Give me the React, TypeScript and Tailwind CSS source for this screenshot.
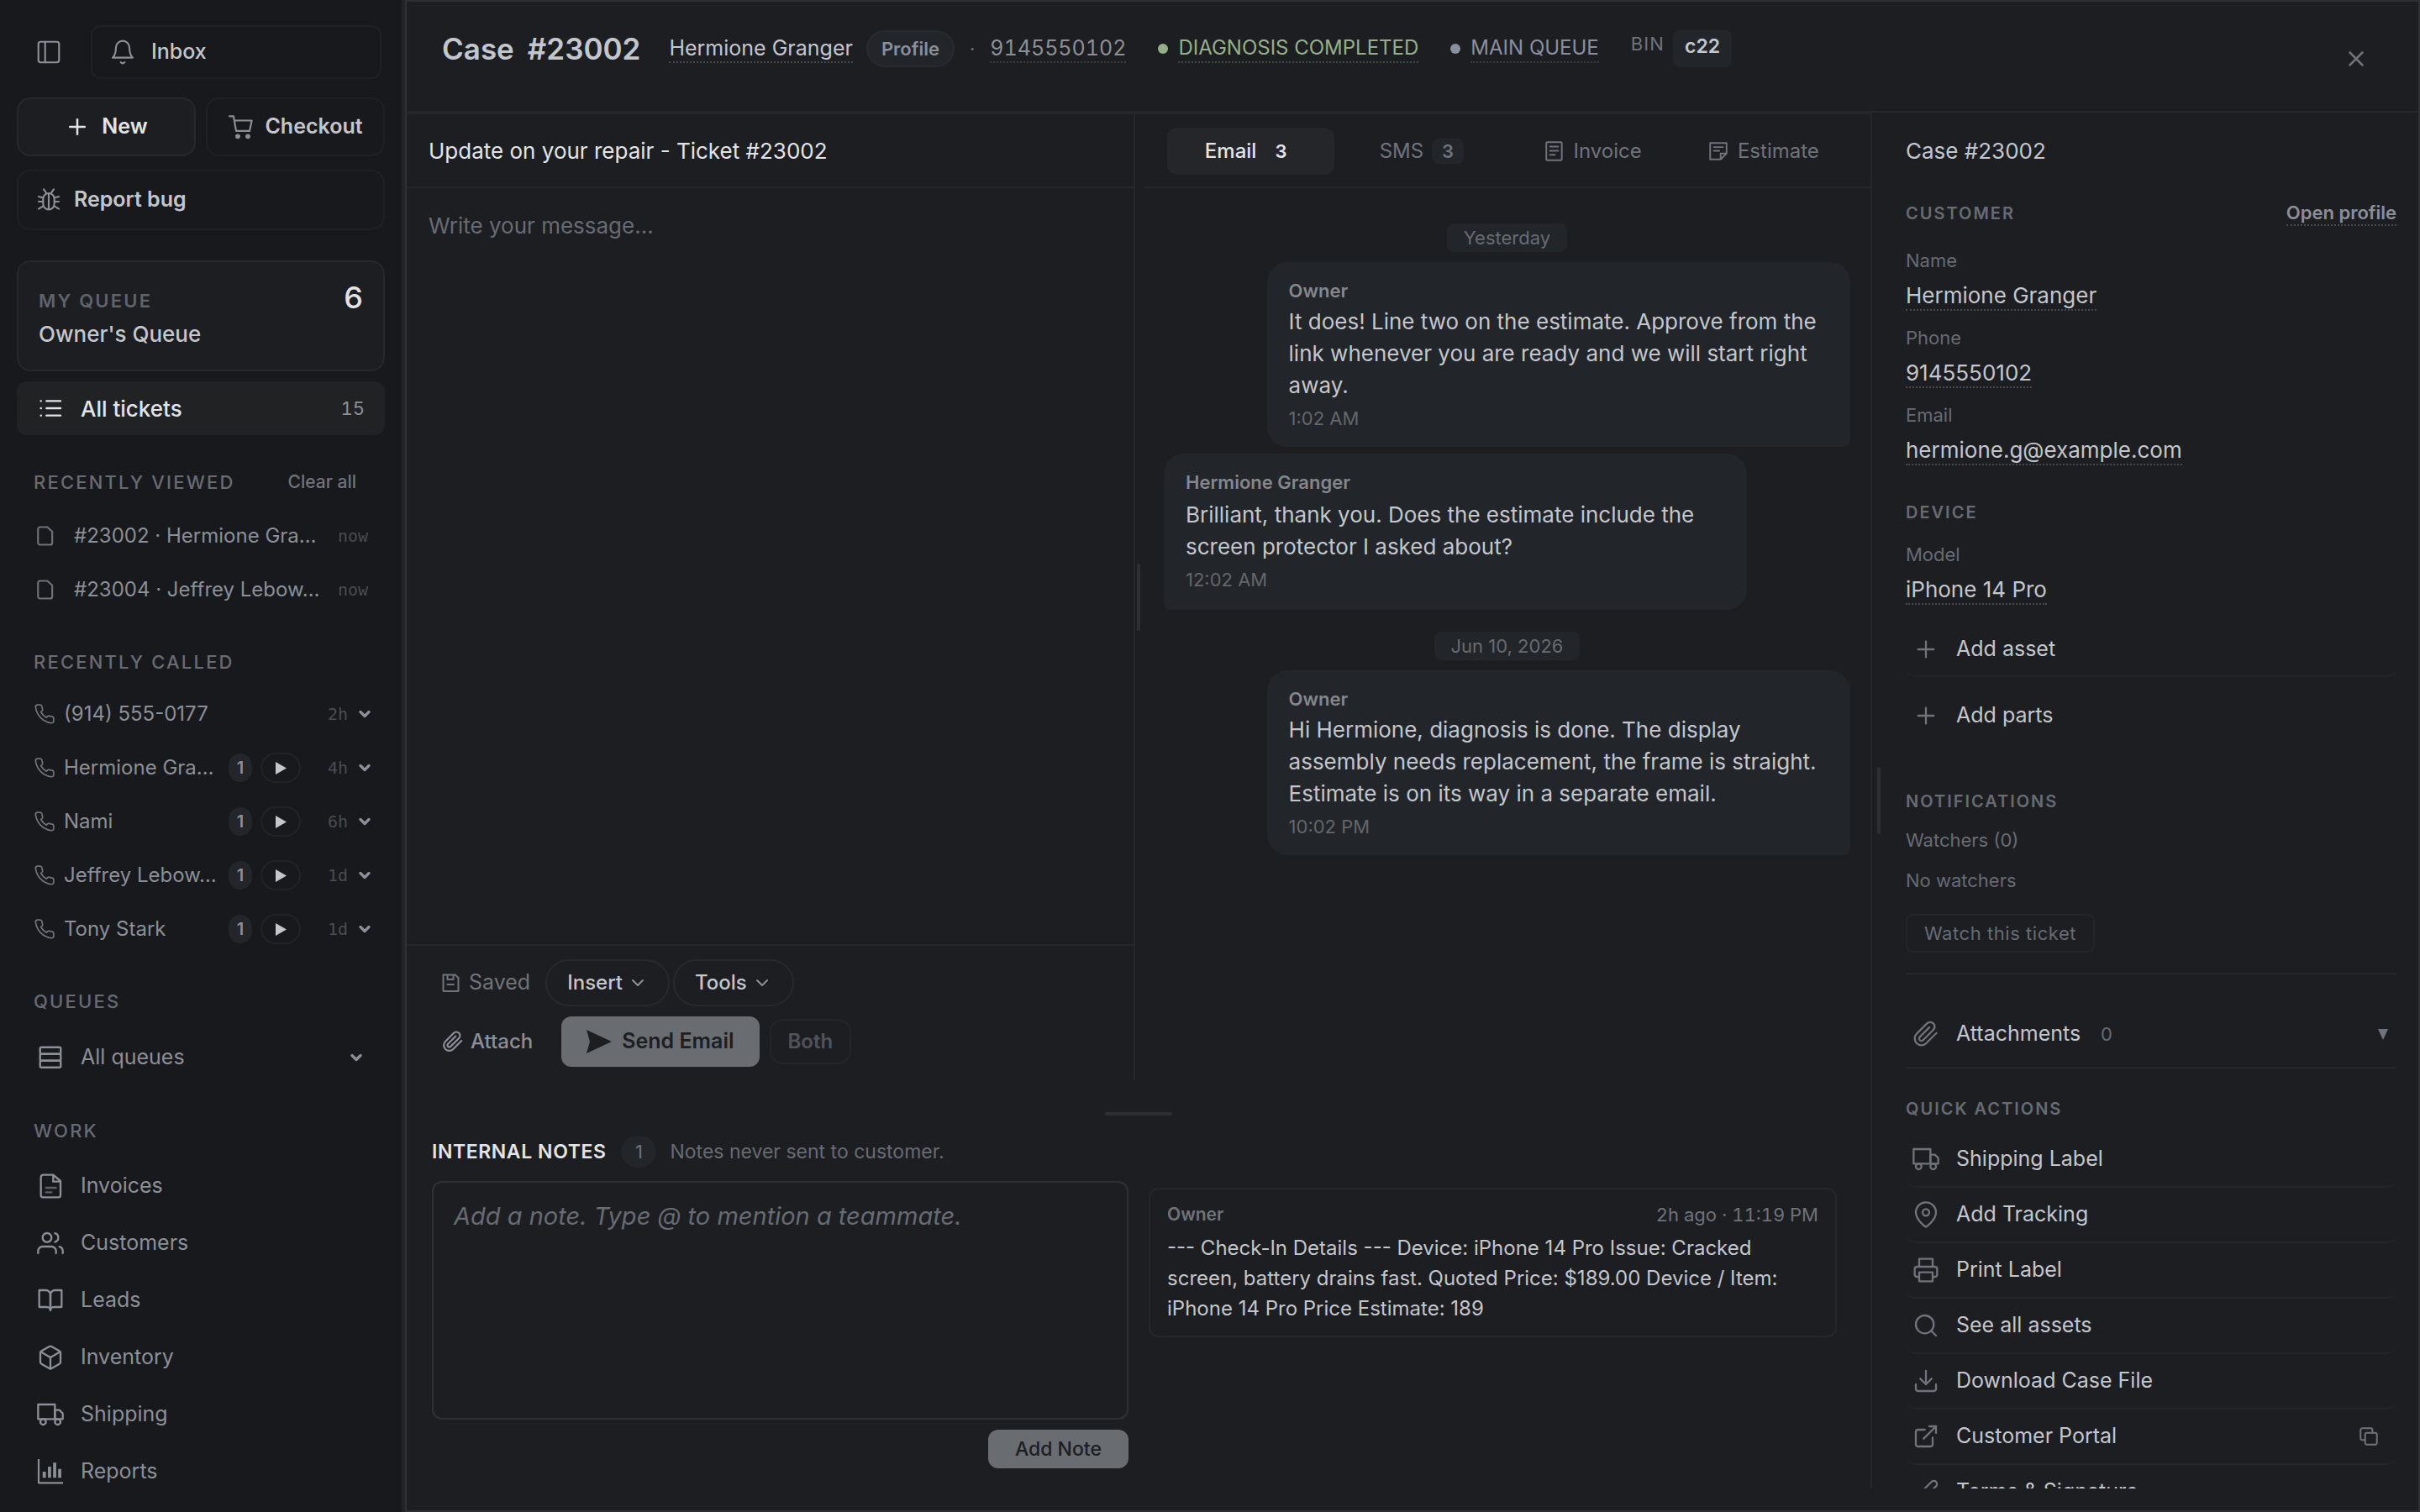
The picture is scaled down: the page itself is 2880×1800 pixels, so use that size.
import React, { useState } from 'react';
import type { ReactNode } from 'react';
import clsx from 'clsx';
import {
  FiBell,
  FiBookOpen,
  FiBox,
  FiChevronDown,
  FiDownload,
  FiEdit2,
  FiExternalLink,
  FiMapPin,
  FiPaperclip,
  FiPhone,
  FiPlus,
  FiPrinter,
  FiSearch,
  FiTruck,
  FiUsers,
  FiX,
} from 'react-icons/fi';

interface Call {
  name: string;
  time: string;
  recordings?: number;
}

interface Message {
  author: string;
  text: string;
  time: string;
  outbound: boolean;
}

const recentTickets = [
  { id: '#23002', label: '#23002 · Hermione Gra…' },
  { id: '#23004', label: '#23004 · Jeffrey Lebow…' },
];

const recentCalls: Call[] = [
  { name: '(914) 555-0177', time: '2h' },
  { name: 'Hermione Gra…', time: '4h', recordings: 1 },
  { name: 'Nami', time: '6h', recordings: 1 },
  { name: 'Jeffrey Lebow…', time: '1d', recordings: 1 },
  { name: 'Tony Stark', time: '1d', recordings: 1 },
];

const firstDay: Message[] = [
  {
    author: 'Owner',
    text: 'It does! Line two on the estimate. Approve from the link whenever you are ready and we will start right away.',
    time: '1:02 AM',
    outbound: true,
  },
  {
    author: 'Hermione Granger',
    text: 'Brilliant, thank you. Does the estimate include the screen protector I asked about?',
    time: '12:02 AM',
    outbound: false,
  },
];

const secondDay: Message[] = [
  {
    author: 'Owner',
    text: 'Hi Hermione, diagnosis is done. The display assembly needs replacement, the frame is straight. Estimate is on its way in a separate email.',
    time: '10:02 PM',
    outbound: true,
  },
];

/* ---------- icons ---------- */

function Svg({ size = 32, stroke = 1.6, children }: { size?: number; stroke?: number; children: ReactNode }) {
  return (
    <svg
      width={size}
      height={size}
      viewBox="0 0 24 24"
      fill="none"
      stroke="currentColor"
      strokeWidth={stroke}
      strokeLinecap="round"
      strokeLinejoin="round"
      className="shrink-0"
      aria-hidden="true"
    >
      {children}
    </svg>
  );
}

const PanelIcon = () => (
  <Svg>
    <rect x="2.800" y="2.800" width="18.400" height="18.400" rx="2" />
    <path d="M8.800 2.800v18.400" />
  </Svg>
);

const CartIcon = () => (
  <Svg>
    <path d="M1.500 2.500h3.700l2.300 13.200h12l2-9.300H6" />
    <circle cx="9" cy="20.500" r="1.400" fill="currentColor" />
    <circle cx="18" cy="20.500" r="1.400" fill="currentColor" />
  </Svg>
);

const BugIcon = () => (
  <Svg>
    <path d="M7 11a5 5 0 0 1 10 0v4.500a5 5 0 0 1-10 0zM12 6.500v14M7.500 2.500l2 2.800M16.500 2.500l-2 2.800M7 10.200 3 9M17 10.200 21 9M7 13.500H3M17 13.500h4M7.400 17.300 3 20M16.600 17.300 21 20" />
  </Svg>
);

const ListIcon = () => (
  <Svg stroke={1.8}>
    <path d="M8.500 5.500H21M8.500 12H21M8.500 18.500H21M3.500 5.500h.1M3.500 12h.1M3.500 18.500h.1" />
  </Svg>
);

const NoteIcon = () => (
  <Svg size={28} stroke={1.8}>
    <path d="M6.500 3h7.500L19 7.500V19a2 2 0 0 1-2 2H6.500a2 2 0 0 1-2-2V5a2 2 0 0 1 2-2z" />
  </Svg>
);

const RowsIcon = () => (
  <Svg stroke={1.8}>
    <rect x="2.800" y="2.800" width="18.400" height="6" rx="1.200" />
    <rect x="2.800" y="8.800" width="18.400" height="6" rx="1.200" />
    <rect x="2.800" y="14.800" width="18.400" height="6" rx="1.200" />
  </Svg>
);

const FileIcon = () => (
  <Svg stroke={1.75}>
    <path d="M5.500 2h9L21 7.500V20a2 2 0 0 1-2 2H5.500a2 2 0 0 1-2-2V4a2 2 0 0 1 2-2zM14.500 2v6H21" />
    <path d="M8 13.500h9M8 17.500h5" opacity="0.6" />
  </Svg>
);

const ChartIcon = () => (
  <Svg>
    <path d="M1.500 1.500v20.500h21" strokeLinecap="square" />
    <path d="M6.500 12v5.500M11.200 7.500v10M15.800 4v13.500M20.300 9.500v8" strokeWidth="2.800" strokeLinecap="butt" />
  </Svg>
);

const InvoiceIcon = () => (
  <Svg size={26} stroke={1.8}>
    <rect x="3" y="2" width="17" height="20" rx="1" />
    <path d="M7 7h9M7 11.500h9M7 16h5.500" />
  </Svg>
);

const EstimateIcon = () => (
  <Svg size={26} stroke={1.8}>
    <path d="M3 3h18v11.500L14.500 21H3zM14.500 21v-6.500H21M7 7.500h10M7 11.500h6" />
  </Svg>
);

const SaveIcon = () => (
  <Svg size={24} stroke={2}>
    <path d="M3.500 2.500h14l4 3.500v16h-18zM8.500 2.500v5.500h7V2.500M8.500 14h7.500" />
  </Svg>
);

const CopyIcon = () => (
  <Svg size={26} stroke={1.8}>
    <rect x="8" y="8" width="13" height="13" rx="2" />
    <path d="M8 16H5a2 2 0 0 1-2-2V5a2 2 0 0 1 2-2h9a2 2 0 0 1 2 2v3" />
  </Svg>
);

const SendIcon = () => (
  <svg width="30" height="28" viewBox="0 0 30 28" fill="currentColor" className="shrink-0" aria-hidden="true">
    <path d="M0 0 30 14 0 28 4 14z" />
  </svg>
);

const workItems: { label: string; icon: ReactNode }[] = [
  { label: 'Invoices', icon: <FileIcon /> },
  { label: 'Customers', icon: <FiUsers size={32} strokeWidth={1.75} /> },
  { label: 'Leads', icon: <FiBookOpen size={32} strokeWidth={1.75} /> },
  { label: 'Inventory', icon: <FiBox size={32} strokeWidth={1.75} /> },
  { label: 'Shipping', icon: <FiTruck size={32} strokeWidth={1.75} /> },
  { label: 'Reports', icon: <ChartIcon /> },
];

const quickActions: { label: string; icon: ReactNode; copy?: boolean }[] = [
  { label: 'Shipping Label', icon: <FiTruck size={32} strokeWidth={1.75} /> },
  { label: 'Add Tracking', icon: <FiMapPin size={32} strokeWidth={1.75} /> },
  { label: 'Print Label', icon: <FiPrinter size={32} strokeWidth={1.75} /> },
  { label: 'See all assets', icon: <FiSearch size={32} strokeWidth={1.75} /> },
  { label: 'Download Case File', icon: <FiDownload size={32} strokeWidth={1.75} /> },
  { label: 'Customer Portal', icon: <FiExternalLink size={32} strokeWidth={1.75} />, copy: true },
  { label: 'Terms & Signature', icon: <FiEdit2 size={32} strokeWidth={1.75} /> },
];

/* ---------- sidebar ---------- */

function NavHeading({ children }: { children: ReactNode }) {
  return <h2 className="text-[22px] leading-8 font-medium tracking-widest text-[#676b73]">{children}</h2>;
}

function CallRow({ call }: { call: Call }) {
  return (
    <li className="flex h-16 items-center pr-[34px] pl-10">
      <FiPhone size={26} strokeWidth={1.6} className="shrink-0 text-[#6f737b]" />
      <a href="#call" className="ml-2.5 w-[184px] text-2xl leading-8 whitespace-nowrap text-[#8b8f97]">
        {call.name}
      </a>
      {call.recordings && (
        <>
          <span className="ml-3 flex h-[34px] w-7 items-center justify-center rounded-full bg-[#222529] text-xl font-semibold text-[#8b8f97]">
            {call.recordings}
          </span>
          <button
            aria-label={`Play call with ${call.name}`}
            className="ml-2.5 flex h-9 w-12 items-center justify-center rounded-full border-2 border-[#212327] text-[#c3c6cc]"
          >
            <svg width="13" height="15" viewBox="0 0 13 15" fill="currentColor" aria-hidden="true">
              <path d="M0 0 13 7.500 0 15z" />
            </svg>
          </button>
        </>
      )}
      <span className="ml-auto font-['DejaVu_Sans_Mono',monospace] text-xl text-[#494c53]">{call.time}</span>
      <button aria-label="Show call details" className="ml-2.5 text-[#8b8f97]">
        <FiChevronDown size={20} strokeWidth={4} />
      </button>
    </li>
  );
}

function Sidebar() {
  return (
    <aside className="flex w-[482px] shrink-0 flex-col overflow-hidden border-r-4 border-[#222429] bg-[#18191d] text-[#c3c6cc]">
      <div className="flex items-center pt-[30px] pr-6 pl-[42px]">
        <button aria-label="Collapse sidebar" className="mr-[34px] text-[#8b8f97]">
          <PanelIcon />
        </button>
        <button className="flex h-16 flex-1 items-center gap-[18px] rounded-xl border-2 border-[#1f2125] px-5 text-[25px] font-medium">
          <FiBell size={32} strokeWidth={1.6} className="text-[#8b8f97]" />
          Inbox
        </button>
      </div>

      <div className="mt-[22px] grid grid-cols-2 gap-x-3 gap-y-4 px-5">
        <button className="flex h-[70px] items-center justify-center gap-3.5 rounded-2xl border-2 border-[#26282c] bg-[#1d1e22] text-[25px] font-semibold text-[#e3e4e8]">
          <FiPlus size={30} strokeWidth={2} />
          New
        </button>
        <button className="flex h-[70px] items-center justify-center gap-3 rounded-2xl border-2 border-[#1f2125] text-[25px] font-semibold">
          <span className="text-[#8b8f97]"><CartIcon /></span>
          Checkout
        </button>
        <button className="col-span-2 flex h-[72px] items-center gap-3.5 rounded-2xl border-2 border-[#1f2125] px-5 text-[25px] font-semibold">
          <span className="text-[#8b8f97]"><BugIcon /></span>
          Report bug
        </button>
      </div>

      <div className="mt-9 px-5">
        <a href="#queue" className="flex h-[132px] justify-between rounded-2xl border-2 border-[#26282c] bg-[#1d1e22] px-6">
          <span className="flex flex-col pt-[26px]">
            <span className="text-[22px] leading-10 font-semibold tracking-widest text-[#5f636b]">MY QUEUE</span>
            <span className="text-[26px] leading-10 font-medium">Owner's Queue</span>
          </span>
          <span className="pt-[22px] text-4xl leading-10 font-medium text-[#e3e4e8]">6</span>
        </a>
        <a href="#tickets" className="mt-3 flex h-16 items-center rounded-xl bg-[#212224] px-6 text-[#e3e4e8]">
          <ListIcon />
          <span className="ml-5 text-[26px] font-medium">All tickets</span>
          <span className="ml-auto text-[22px] tabular-nums text-[#8b8f97]">15</span>
        </a>
      </div>

      <div className="mt-10 flex items-center justify-between pr-[54px] pl-10">
        <NavHeading>RECENTLY VIEWED</NavHeading>
        <button className="text-[21px] leading-8 font-medium text-[#6f737b]">Clear all</button>
      </div>
      <ul className="mt-4">
        {recentTickets.map((t) => (
          <li key={t.id} className="flex h-16 items-center pr-10 pl-10">
            <span className="text-[#6f737b]"><NoteIcon /></span>
            <a href="#ticket" className="ml-5 text-2xl leading-8 whitespace-nowrap text-[#8b8f97]">{t.label}</a>
            <span className="ml-auto font-['DejaVu_Sans_Mono',monospace] text-xl text-[#494c53]">now</span>
          </li>
        ))}
      </ul>

      <div className="mt-[38px] pl-10">
        <NavHeading>RECENTLY CALLED</NavHeading>
      </div>
      <ul className="mt-3.5">
        {recentCalls.map((call) => (
          <CallRow key={call.name} call={call} />
        ))}
      </ul>

      <div className="mt-[38px] pl-10">
        <NavHeading>QUEUES</NavHeading>
      </div>
      <button className="mt-[18px] flex h-[66px] items-center pr-11 pl-11 text-[#8b8f97]">
        <RowsIcon />
        <span className="ml-5 text-[25px]">All queues</span>
        <FiChevronDown size={20} strokeWidth={4} className="ml-auto" />
      </button>

      <div className="mt-[38px] pl-10">
        <NavHeading>WORK</NavHeading>
      </div>
      <nav className="mt-4">
        {workItems.map((item) => (
          <a key={item.label} href="#work" className="flex h-[68px] items-center gap-5 pl-11 text-[25px] text-[#8b8f97]">
            {item.icon}
            {item.label}
          </a>
        ))}
      </nav>
    </aside>
  );
}

/* ---------- case header ---------- */

function CaseHeader() {
  return (
    <header className="flex h-[132px] shrink-0 items-start border-b-2 border-[#26272b] pt-[34px] pr-[52px] pl-[42px]">
      <div className="flex h-11 items-center">
        <h1 className="flex gap-4 text-[35px] font-semibold text-[#c3c6cc]">
          <span>Case</span>
          <span>#23002</span>
        </h1>
        <button className="ml-[34px] border-b-2 border-dotted border-[#47494e] text-[25px] leading-8 text-[#c3c6cc]">
          Hermione Granger
        </button>
        <a href="#profile" className="ml-4 flex h-11 items-center rounded-full border-2 border-[#282a2f] bg-[#222529] px-4 text-[22px] font-semibold text-[#8b8f97]">
          Profile
        </a>
        <span className="mx-[18px] text-[22px] text-[#6f737b]">·</span>
        <button className="border-b-2 border-dotted border-[#3b3d42] text-[25px] leading-8 tabular-nums text-[#8b8f97]">9145550102</button>
        <span className="ml-[38px] h-3 w-3 rounded-full bg-[#94b08b]" />
        <button className="ml-3 border-b-2 border-dotted border-[#3f4a3f] text-2xl leading-8 text-[#94b08b]">DIAGNOSIS COMPLETED</button>
        <span className="ml-[38px] h-3 w-3 rounded-full bg-[#8a8fa0]" />
        <button className="ml-3 border-b-2 border-dotted border-[#3b3d42] text-2xl leading-8 text-[#8a8fa0]">MAIN QUEUE</button>
        <span className="ml-[38px] self-start text-[22px] leading-8 tracking-wider text-[#6f737b]">BIN</span>
        <button className="ml-2.5 h-11 rounded-lg bg-[#222529] px-3.5 pb-1.5 text-[23px] font-semibold text-[#c3c6cc]">c22</button>
      </div>
      <button aria-label="Close case" className="mt-3 ml-auto flex h-11 w-11 items-center justify-center text-[#6f737b]">
        <FiX size={30} strokeWidth={2} />
      </button>
    </header>
  );
}

/* ---------- composer ---------- */

function Composer() {
  return (
    <section className="flex min-w-0 flex-1 flex-col border-r-2 border-[#26272b]">
      <input
        aria-label="Subject"
        defaultValue="Update on your repair - Ticket #23002"
        className="h-[88px] shrink-0 border-b-2 border-[#26272b] bg-transparent px-[26px] text-[26px] text-[#e3e4e8] outline-none"
      />
      <textarea
        aria-label="Message"
        placeholder="Write your message..."
        className="flex-1 resize-none bg-transparent px-[26px] pt-[25px] text-[26px] leading-10 text-[#e3e4e8] outline-none placeholder:text-[#676b73]"
      />
      <div className="flex flex-col gap-3 border-t-2 border-[#26272b] px-[26px] py-4">
        <div className="flex items-center gap-1">
          <button className="flex items-center gap-2.5 px-3.5 text-[25px] text-[#6f737b]">
            <SaveIcon />
            Saved
          </button>
          {['Insert', 'Tools'].map((label) => (
            <button
              key={label}
              className="flex h-14 items-center gap-1.5 rounded-full border-2 border-[#27292d] px-6 text-2xl font-medium text-[#c3c6cc]"
            >
              {label}
              <FiChevronDown size={24} strokeWidth={2} className="text-[#8b8f97]" />
            </button>
          ))}
        </div>
        <div className="flex items-center gap-3">
          <button className="mr-1.5 flex items-center gap-2 px-4 text-2xl font-medium text-[#8b8f97]">
            <FiPaperclip size={26} strokeWidth={2} />
            Attach
          </button>
          <button className="flex h-[60px] items-center gap-3 rounded-xl bg-[#696c70] px-[30px] text-[25px] font-semibold text-[#1d1e22]">
            <SendIcon />
            Send Email
          </button>
          <button className="h-[54px] rounded-2xl border-2 border-[#232529] px-5 text-2xl font-semibold text-[#505359]">Both</button>
        </div>
      </div>
    </section>
  );
}

/* ---------- conversation ---------- */

function DayLabel({ children }: { children: ReactNode }) {
  return (
    <div className="mb-3 self-center rounded-lg bg-[#222529] px-5 text-[22px] leading-[34px] text-[#676b73]">
      {children}
    </div>
  );
}

function Bubble({ message }: { message: Message }) {
  return (
    <article
      className={clsx(
        'w-[85%] rounded-3xl bg-[#222529] px-[26px] pt-[18px]',
        message.outbound ? 'self-end rounded-br-lg pb-[18px]' : 'self-start rounded-bl-lg pb-5',
      )}
    >
      <h3 className="text-[22px] leading-8 font-semibold text-[#85878c]">{message.author}</h3>
      <p className={clsx('text-[26px] leading-[38px] text-[#c3c6cc]', message.outbound ? 'mt-0.5' : 'mt-1')}>{message.text}</p>
      <time className="mt-1 block text-[22px] leading-8 text-[#63666c]">{message.time}</time>
    </article>
  );
}

function Conversation() {
  const [tab, setTab] = useState('email');
  const tabs = [
    { id: 'email', label: 'Email', count: 3 },
    { id: 'sms', label: 'SMS', count: 3 },
    { id: 'invoice', label: 'Invoice', icon: <InvoiceIcon /> },
    { id: 'estimate', label: 'Estimate', icon: <EstimateIcon /> },
  ];

  return (
    <section className="flex min-w-0 flex-1 flex-col">
      <div role="tablist" className="grid h-[88px] shrink-0 grid-cols-4 gap-1 border-b-2 border-[#26272b] px-7 py-4">
        {tabs.map((t) => (
          <button
            key={t.id}
            role="tab"
            aria-selected={tab === t.id}
            onClick={() => setTab(t.id)}
            className={clsx(
              'flex h-14 items-center justify-center gap-2.5 rounded-xl text-2xl',
              tab === t.id ? 'bg-[#25262a] font-medium text-[#e3e4e8]' : 'text-[#6f737b]',
            )}
          >
            {t.icon}
            {t.label}
            {t.count && (
              <span
                className={clsx(
                  'rounded-lg px-3 text-[22px] leading-[30px] font-semibold',
                  tab !== t.id && 'bg-[#222529]',
                )}
              >
                {t.count}
              </span>
            )}
          </button>
        ))}
      </div>
      <div className="flex flex-1 flex-col overflow-hidden px-6 pt-[42px]">
        <DayLabel>Yesterday</DayLabel>
        <div className="mb-[26px] flex flex-col gap-2">
          {firstDay.map((m) => (
            <Bubble key={m.time} message={m} />
          ))}
        </div>
        <DayLabel>Jun 10, 2026</DayLabel>
        {secondDay.map((m) => (
          <Bubble key={m.time} message={m} />
        ))}
      </div>
    </section>
  );
}

/* ---------- internal notes ---------- */

function InternalNotes() {
  return (
    <section className="grid grid-cols-2 gap-6 px-[30px] pt-4 pb-[50px]">
      <div className="flex min-w-0 flex-col">
        <div className="flex h-[38px] items-center">
          <h2 className="text-[23px] font-semibold tracking-wide text-[#e3e4e8]">INTERNAL NOTES</h2>
          <span className="ml-[18px] flex h-[38px] w-[42px] items-center justify-center rounded-full bg-[#222529] text-[22px] text-[#6f737b]">1</span>
          <span className="ml-4 text-[23px] text-[#676b73]">Notes never sent to customer.</span>
        </div>
        <textarea
          aria-label="Internal note"
          placeholder="Add a note. Type @ to mention a teammate."
          className="mt-4 h-[284px] resize-none rounded-xl border-2 border-[#2f3035] bg-transparent px-6 pt-5 text-[29px] leading-10 text-[#c3c6cc] outline-none placeholder:text-[#676b73] placeholder:italic"
        />
        <button className="mt-3 h-[46px] self-end rounded-xl bg-[#696c70] px-8 text-[23px] font-medium text-[#1d1e22]">Add Note</button>
      </div>
      <div className="flex min-w-0 flex-col pt-[62px] pr-2.5">
        <article className="rounded-xl border-2 border-[#26272b] px-5 pt-3 pb-3.5">
          <div className="flex items-center justify-between text-[22px] leading-9 text-[#6f737b]">
            <h3 className="text-[21px] font-semibold">Owner</h3>
            <time className="tabular-nums">2h ago · 11:19 PM</time>
          </div>
          <p className="mt-1 text-2xl leading-9 text-[#c3c6cc]">
            --- Check-In Details --- Device: iPhone 14 Pro Issue: Cracked screen, battery drains fast. Quoted Price: $189.00 Device / Item: iPhone 14 Pro Price Estimate: 189
          </p>
        </article>
      </div>
    </section>
  );
}

/* ---------- details panel ---------- */

function PanelHeading({ children }: { children: ReactNode }) {
  return <h2 className="text-xl leading-8 font-semibold tracking-widest text-[#676b73]">{children}</h2>;
}

function Field({ label, value }: { label: string; value: string }) {
  return (
    <div className="h-[92px]">
      <dt className="text-[22px] leading-8 text-[#676b73]">{label}</dt>
      <dd className="mt-2.5">
        <button className="border-b-2 border-dotted border-[#47494e] text-[26px] leading-8 text-[#c3c6cc]">{value}</button>
      </dd>
    </div>
  );
}

function DetailsPanel() {
  return (
    <aside className="relative mb-[26px] flex w-[652px] shrink-0 flex-col overflow-hidden border-l-2 border-[#26272b] pr-[26px] pl-10">
      <div className="absolute top-1/2 left-1.5 h-20 w-1 -translate-y-1/2 rounded-full bg-[#2e2f34]" />
      <h2 className="mt-[26px] text-[26px] leading-10 text-[#c3c6cc]">Case #23002</h2>

      <div className="mt-[38px] flex items-center justify-between">
        <PanelHeading>CUSTOMER</PanelHeading>
        <a href="#profile" className="border-b-2 border-dotted border-[#47494e] text-[22px] leading-7 font-semibold text-[#8b8f97]">Open profile</a>
      </div>
      <dl className="mt-6">
        <Field label="Name" value="Hermione Granger" />
        <Field label="Phone" value="9145550102" />
        <Field label="Email" value="hermione.g@example.com" />
      </dl>

      <div className="mt-6">
        <PanelHeading>DEVICE</PanelHeading>
      </div>
      <dl className="mt-[18px]">
        <Field label="Model" value="iPhone 14 Pro" />
      </dl>

      <button className="mt-1.5 flex h-16 shrink-0 items-center gap-5 rounded-b-xl border-b-2 border-[#232529] pl-2 text-[25px] text-[#c3c6cc]">
        <FiPlus size={32} strokeWidth={1.75} className="text-[#6f737b]" />
        Add asset
      </button>
      <button className="mt-3.5 flex h-16 shrink-0 items-center gap-5 pl-2 text-[25px] text-[#c3c6cc]">
        <FiPlus size={32} strokeWidth={1.75} className="text-[#6f737b]" />
        Add parts
      </button>

      <div className="mt-[54px]">
        <PanelHeading>NOTIFICATIONS</PanelHeading>
      </div>
      <p className="mt-3.5 text-[22px] leading-8 text-[#676b73]">Watchers (0)</p>
      <p className="mt-4 text-[22px] leading-8 text-[#676b73]">No watchers</p>
      <button className="mt-6 h-[46px] shrink-0 self-start rounded-lg border-2 border-[#232529] px-5 text-[22px] tracking-wide text-[#676b73]">Watch this ticket</button>

      <button className="mt-6 flex h-[114px] shrink-0 items-center border-y-2 border-[#26272b] pt-8 pr-2.5 pl-2 text-[25px] text-[#c3c6cc]">
        <FiPaperclip size={32} strokeWidth={1.75} className="mr-5 text-[#6f737b]" />
        Attachments
        <span className="ml-6 text-[22px] text-[#676b73]">0</span>
        <svg width="12" height="13" viewBox="0 0 12 13" fill="#6f737b" className="ml-auto" aria-hidden="true">
          <path d="M0 0h12L6 13z" />
        </svg>
      </button>

      <div className="mt-8">
        <PanelHeading>QUICK ACTIONS</PanelHeading>
      </div>
      <ul className="mt-3">
        {quickActions.map((action) => (
          <li key={action.label} className="flex h-[66px] items-center rounded-b-xl border-b-2 border-[#232529] pr-5 pl-2 text-[#6f737b]">
            <button className="flex flex-1 items-center gap-5">
              {action.icon}
              <span className="text-[25px] text-[#c3c6cc]">{action.label}</span>
            </button>
            {action.copy && (
              <button aria-label="Copy portal link"><CopyIcon /></button>
            )}
          </li>
        ))}
      </ul>
    </aside>
  );
}

export default function App() {
  return (
    <div className="flex h-screen overflow-hidden bg-[#1d1e22] font-['Inter',sans-serif]">
      <Sidebar />
      <main className="flex min-w-0 flex-1 flex-col border-2 border-[#2e3034]">
        <CaseHeader />
        <div className="flex min-h-0 flex-1">
          <div className="flex min-w-0 flex-1 flex-col">
            <div className="flex min-h-0 flex-1 border-t-2 border-[#26272b]">
              <Composer />
              <div className="flex w-2.5 shrink-0 items-center pl-0.5">
                <div className="h-20 w-1 rounded-full bg-[#2e2f34]" />
              </div>
              <Conversation />
            </div>
            <div className="flex h-[50px] shrink-0 items-end justify-center pb-2">
              <div className="h-1 w-20 rounded-full bg-[#2e2f34]" />
            </div>
            <InternalNotes />
          </div>
          <DetailsPanel />
        </div>
      </main>
    </div>
  );
}
